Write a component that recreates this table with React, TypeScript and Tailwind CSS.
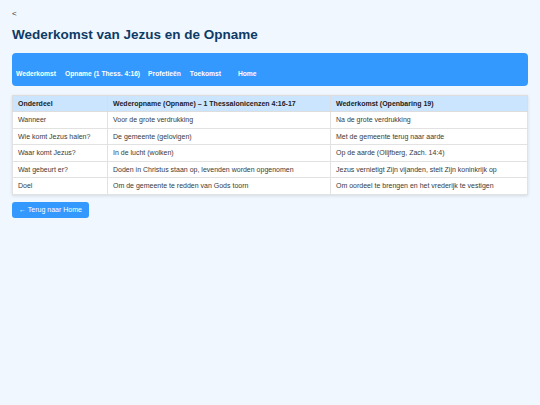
import React from "react";

const rows = [
  ["Wanneer", "Voor de grote verdrukking", "Na de grote verdrukking"],
  ["Wie komt Jezus halen?", "De gemeente (gelovigen)", "Met de gemeente terug naar aarde"],
  ["Waar komt Jezus?", "In de lucht (wolken)", "Op de aarde (Olijfberg, Zach. 14:4)"],
  ["Wat gebeurt er?", "Doden in Christus staan op, levenden worden opgenomen", "Jezus vernietigt Zijn vijanden, stelt Zijn koninkrijk op"],
  ["Doel", "Om de gemeente te redden van Gods toorn", "Om oordeel te brengen en het vrederijk te vestigen"],
];

export default function App() {
  return (
    <div className="min-h-[405px] w-[540px] bg-[#f0f7ff] px-3 pt-[9px] font-['Liberation_Sans',Arial,sans-serif] text-[#333]">
      <div className="text-[8px] leading-[10px] text-[#333]">&lt;</div>
      <h1 className="mt-[8px] text-[13.5px] font-bold leading-[16px] text-[#0d3b66]">
        Wederkomst van Jezus en de Opname
      </h1>
      <nav className="mt-[10px] flex h-[33px] items-end rounded-[4px] bg-[#3399ff] pb-[8px] pl-[4px] text-[6.7px] font-bold leading-[9px] text-white">
        <span>Wederkomst</span>
        <span className="ml-[9px]">Opname (1 Thess. 4:16)</span>
        <span className="ml-[8px]">Profetieën</span>
        <span className="ml-[9px]">Toekomst</span>
        <span className="ml-[17px]">Home</span>
      </nav>
      <div className="mt-[9px] bg-white shadow-[0_1px_3px_rgba(0,0,0,0.12)]">
        <table className="w-full border-collapse text-[7px] leading-[9px]">
          <thead>
            <tr className="bg-[#cce5ff] text-[#222]">
              <th className="h-[16px] w-[95px] border border-[#ddd] px-[5px] text-left font-bold">Onderdeel</th>
              <th className="h-[16px] w-[223px] border border-[#ddd] px-[5px] text-left font-bold">Wederopname (Opname) – 1 Thessalonicenzen 4:16-17</th>
              <th className="h-[16px] border border-[#ddd] px-[5px] text-left font-bold">Wederkomst (Openbaring 19)</th>
            </tr>
          </thead>
          <tbody>
            {rows.map((r) => (
              <tr key={r[0]}>
                {r.map((c, i) => (
                  <td key={i} className="h-[16.5px] border border-[#e2e2e2] px-[5px] text-left text-[#3a3a3a]">
                    {c}
                  </td>
                ))}
              </tr>
            ))}
          </tbody>
        </table>
      </div>
      <button className="mt-[7px] flex h-[16px] w-[77px] items-center justify-center rounded-[3px] bg-[#3399ff] text-[7px] leading-[9px] text-white">
        ← Terug naar Home
      </button>
    </div>
  );
}
